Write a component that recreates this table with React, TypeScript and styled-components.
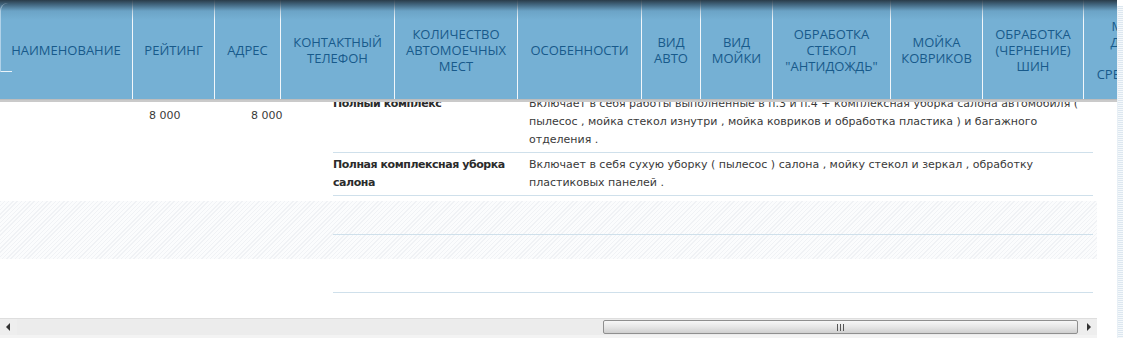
import styled, { createGlobalStyle } from 'styled-components';

const GlobalStyle = createGlobalStyle`
    html, body {
        margin: 0;
        padding: 0;
        background: #ffffff;
    }
    body {
        width: 1123px;
        height: 338px;
        overflow: hidden;
        font-family: "DejaVu Sans", Verdana, sans-serif;
    }
`

const Page = styled.div`
    display: flex;
    width: 1123px;
    height: 338px;
`
const MainColumn = styled.div`
    display: flex;
    flex-direction: column;
    width: 1117px;
`
const DottedEdge = styled.div`
    width: 6px;
    margin-top: 6px;
    background-image: repeating-linear-gradient(180deg, #dce7f0 0 1px, #f6f9fb 1px 2px);
    border-left: 1px solid #e8f0f6;
`
const HeaderBar = styled.div`
    position: relative;
    display: flex;
    height: 99px;
    width: 1117px;
    overflow: hidden;
    background: #75b0d4;

    /* dark shade on top */
    &::after {
        content: '';
        position: absolute;
        left: 0;
        right: 0;
        top: 0;
        height: 20px;
        background: linear-gradient(180deg, rgba(38,54,66,0.95) 0px, rgba(52,82,104,0.75) 5px, rgba(90,140,172,0.35) 11px, rgba(117,176,212,0) 20px);
        pointer-events: none;
    }
    /* rounded highlight on the far left */
    &::before {
        content: '';
        position: absolute;
        left: 0;
        top: 3px;
        width: 11px;
        height: 68px;
        border-left: 1px solid rgba(225,240,250,0.55);
        border-bottom: 1px solid rgba(255,255,255,0.85);
        border-top-left-radius: 8px;
        z-index: 1;
    }
`
const HeaderCell = styled.div<{ $w: number }>`
    flex: 0 0 ${(p) => p.$w}px;
    box-sizing: border-box;
    display: flex;
    align-items: center;
    justify-content: center;
    text-align: center;
    border-right: 1px solid #f2f7fb;
    font-family: "Open Sans", "DejaVu Sans", sans-serif;
    font-size: 13px;
    line-height: 16px;
    color: #185a8b;
    white-space: nowrap;
    padding-top: 1px;
`
const HeaderGap = styled.div`
    height: 3px;
    width: 1117px;
    background: #cacaca;
    border-top: 1px solid #bdbdbd;
    box-sizing: border-box;
`
const BodyViewport = styled.div`
    width: 1097px;
    height: 217px;
    overflow: hidden;
    background: #ffffff;
`
const BodyInner = styled.div`
    margin-top: -10px;
`
const OuterRow = styled.div<{ $striped?: boolean; $padBottom: number }>`
    display: grid;
    grid-template-columns: 140px 102px 91px 760px;
    padding-bottom: ${(p) => p.$padBottom}px;
    background: ${(p) =>
        p.$striped
            ? 'repeating-linear-gradient(135deg, #f0f2f5 0 1px, #fbfcfd 1px 3px)'
            : '#ffffff'};
`
const PlainCell = styled.div`
    padding: 15px 0 0 9px;
    font-size: 11px;
    line-height: 18px;
    color: #3a3a3a;
`
const NestedTable = styled.div`
    display: flex;
    flex-direction: column;
`
const NestedRow = styled.div<{ $empty?: boolean }>`
    display: grid;
    grid-template-columns: 196px 564px;
    border-bottom: 1px solid #cfe0eb;
    min-height: ${(p) => (p.$empty ? '33px' : '0')};
`
const ServiceName = styled.div`
    padding: 3px 8px 3px 0;
    font-size: 11px;
    font-weight: bold;
    letter-spacing: -0.45px;
    line-height: 18px;
    color: #2b2b2b;
`
const ServiceText = styled.div`
    padding: 3px 0;
    font-size: 11px;
    line-height: 18px;
    color: #3a3a3a;
    white-space: nowrap;
`
const ScrollTrack = styled.div`
    display: flex;
    align-items: stretch;
    width: 1097px;
    height: 17px;
    box-sizing: border-box;
    background: #ececec;
    border-top: 1px solid #dedede;
`
const ScrollButton = styled.div`
    flex: 0 0 17px;
    display: flex;
    align-items: center;
    justify-content: center;
    background: #eeeeee;
`
const ScrollSpace = styled.div<{ $w: number }>`
    flex: 0 0 ${(p) => p.$w}px;
`
const ScrollThumb = styled.div`
    flex: 1;
    margin: 1px 2px 1px 0;
    display: flex;
    align-items: center;
    justify-content: center;
    border: 1px solid #8f8f8f;
    border-radius: 2px;
    background: linear-gradient(180deg, #f7f7f7 0%, #e6e6e6 50%, #cfcfcf 100%);
`
const Grip = styled.div`
    display: flex;
    gap: 2px;
    & > span {
        width: 1px;
        height: 7px;
        background: #555;
    }
`
const BottomLine = styled.div`
    height: 3px;
    width: 1097px;
    background: #f3f3f3;
`

const headerColumns: { w: number; lines: string[] }[] = [
    { w: 133, lines: ['НАИМЕНОВАНИЕ'] },
    { w: 82, lines: ['РЕЙТИНГ'] },
    { w: 66, lines: ['АДРЕС'] },
    { w: 114, lines: ['КОНТАКТНЫЙ', 'ТЕЛЕФОН'] },
    { w: 123, lines: ['КОЛИЧЕСТВО', 'АВТОМОЕЧНЫХ', 'МЕСТ'] },
    { w: 124, lines: ['ОСОБЕННОСТИ'] },
    { w: 59, lines: ['ВИД', 'АВТО'] },
    { w: 72, lines: ['ВИД', 'МОЙКИ'] },
    { w: 118, lines: ['ОБРАБОТКА', 'СТЕКОЛ', '"АНТИДОЖДЬ"'] },
    { w: 92, lines: ['МОЙКА', 'КОВРИКОВ'] },
    { w: 101, lines: ['ОБРАБОТКА', '(ЧЕРНЕНИЕ)', 'ШИН'] },
    { w: 104, lines: ['МОЙКА', 'ДНИЩА', 'ХИМ.', 'СРЕДСТВОМ'] },
];

const Arrow = ({ dir }: { dir: 'left' | 'right' }) => (
    <svg width="5" height="8" viewBox="0 0 5 8">
        {dir === 'left' ? (
            <polygon points="4,0 4,8 0,4" fill="#333" />
        ) : (
            <polygon points="1,0 1,8 5,4" fill="#333" />
        )}
    </svg>
);

const Lines = ({ lines }: { lines: string[] }) => (
    <span>
        {lines.map((l, i) => (
            <span key={i}>
                {i > 0 && <br />}
                {l}
            </span>
        ))}
    </span>
);

export default function App() {
    return (
        <Page>
            <GlobalStyle />
            <MainColumn>
                <HeaderBar>
                    {headerColumns.map((c, i) => (
                        <HeaderCell key={i} $w={c.w}>
                            <Lines lines={c.lines} />
                        </HeaderCell>
                    ))}
                </HeaderBar>
                <HeaderGap />
                <BodyViewport>
                    <BodyInner>
                        <OuterRow $padBottom={5}>
                            <PlainCell />
                            <PlainCell>8 000</PlainCell>
                            <PlainCell>8 000</PlainCell>
                            <NestedTable>
                                <NestedRow>
                                    <ServiceName>Полный комплекс</ServiceName>
                                    <ServiceText>
                                        <Lines
                                            lines={[
                                                'Включает в себя работы выполненные в п.3 и п.4 + комплексная уборка салона автомобиля (',
                                                'пылесос , мойка стекол изнутри , мойка ковриков и обработка пластика ) и багажного',
                                                'отделения .',
                                            ]}
                                        />
                                    </ServiceText>
                                </NestedRow>
                                <NestedRow>
                                    <ServiceName>Полная комплексная уборка салона</ServiceName>
                                    <ServiceText>
                                        <Lines
                                            lines={[
                                                'Включает в себя сухую уборку ( пылесос ) салона , мойку стекол и зеркал , обработку',
                                                'пластиковых панелей .',
                                            ]}
                                        />
                                    </ServiceText>
                                </NestedRow>
                            </NestedTable>
                        </OuterRow>
                        <OuterRow $striped $padBottom={24}>
                            <PlainCell />
                            <PlainCell />
                            <PlainCell />
                            <NestedTable>
                                <NestedRow $empty />
                            </NestedTable>
                        </OuterRow>
                        <OuterRow $padBottom={24}>
                            <PlainCell />
                            <PlainCell />
                            <PlainCell />
                            <NestedTable>
                                <NestedRow $empty />
                            </NestedTable>
                        </OuterRow>
                    </BodyInner>
                </BodyViewport>
                <ScrollTrack>
                    <ScrollButton>
                        <Arrow dir="left" />
                    </ScrollButton>
                    <ScrollSpace $w={586} />
                    <ScrollThumb>
                        <Grip>
                            <span />
                            <span />
                            <span />
                        </Grip>
                    </ScrollThumb>
                    <ScrollButton>
                        <Arrow dir="right" />
                    </ScrollButton>
                </ScrollTrack>
                <BottomLine />
            </MainColumn>
            <DottedEdge />
        </Page>
    );
}
